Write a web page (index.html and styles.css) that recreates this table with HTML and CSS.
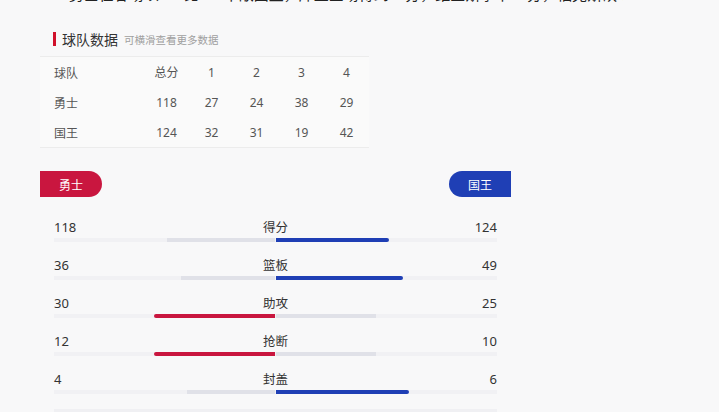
FILE: index.html
```html
<!DOCTYPE html>
<html lang="zh-CN">
<head>
<meta charset="utf-8">
<title>球队数据</title>
<link rel="stylesheet" href="styles.css">
</head>
<body>
<div class="page">
  <p class="lead">1 勇士在客场以118比124不敌国王，库里全场得到32分，维金斯拿下18分，福克斯砍下38分，萨博尼斯贡献三双表现。</p>

  <div class="section-title">
    <span class="mark"></span>
    <span class="title">球队数据</span>
    <span class="hint">可横滑查看更多数据</span>
  </div>

  <div class="score-table">
    <div class="tr head">
      <div class="td team">球队</div><div class="td">总分</div><div class="td">1</div><div class="td">2</div><div class="td">3</div><div class="td">4</div>
    </div>
    <div class="tr">
      <div class="td team">勇士</div><div class="td">118</div><div class="td">27</div><div class="td">24</div><div class="td">38</div><div class="td">29</div>
    </div>
    <div class="tr">
      <div class="td team">国王</div><div class="td">124</div><div class="td">32</div><div class="td">31</div><div class="td">19</div><div class="td">42</div>
    </div>
  </div>

  <div class="teams">
    <span class="pill home">勇士</span>
    <span class="pill away">国王</span>
  </div>

  <div class="stats">
    <div class="stat">
      <div class="stat-line"><span class="v">118</span><span class="label">得分</span><span class="v">124</span></div>
      <div class="bar">
        <div class="half left"><div class="fill lose" style="width:48.76%"></div></div>
        <div class="half right"><div class="fill win away-c" style="width:51.24%"></div></div>
      </div>
    </div>
    <div class="stat">
      <div class="stat-line"><span class="v">36</span><span class="label">篮板</span><span class="v">49</span></div>
      <div class="bar">
        <div class="half left"><div class="fill lose" style="width:42.35%"></div></div>
        <div class="half right"><div class="fill win away-c" style="width:57.65%"></div></div>
      </div>
    </div>
    <div class="stat">
      <div class="stat-line"><span class="v">30</span><span class="label">助攻</span><span class="v">25</span></div>
      <div class="bar">
        <div class="half left"><div class="fill win home-c" style="width:54.55%"></div></div>
        <div class="half right"><div class="fill lose" style="width:45.45%"></div></div>
      </div>
    </div>
    <div class="stat">
      <div class="stat-line"><span class="v">12</span><span class="label">抢断</span><span class="v">10</span></div>
      <div class="bar">
        <div class="half left"><div class="fill win home-c" style="width:54.55%"></div></div>
        <div class="half right"><div class="fill lose" style="width:45.45%"></div></div>
      </div>
    </div>
    <div class="stat">
      <div class="stat-line"><span class="v">4</span><span class="label">封盖</span><span class="v">6</span></div>
      <div class="bar">
        <div class="half left"><div class="fill lose" style="width:40%"></div></div>
        <div class="half right"><div class="fill win away-c" style="width:60%"></div></div>
      </div>
    </div>
    <div class="next-line"></div>
  </div>
</div>
</body>
</html>
```
FILE: styles.css
```css
* { box-sizing: border-box; }
html, body { margin: 0; padding: 0; }
body {
  background: #f8f8f9;
  font-family: "Noto Sans", "Noto Sans CJK SC", sans-serif;
  color: #333;
  overflow: hidden;
}
.page {
  display: flow-root;
  width: 511px;
  padding-left: 40px;
}
.lead {
  margin: -17px 0 0 17px;
  font-size: 15px;
  line-height: 22px;
  height: 22px;
  white-space: nowrap;
  overflow: hidden;
  width: 566px;
  color: #222;
  font-family: "Noto Sans CJK SC", sans-serif;
}
.section-title {
  display: flex;
  align-items: center;
  height: 20px;
  margin-top: 24px;
  padding-left: 13px;
}
.mark {
  width: 3px;
  height: 14px;
  background: #d0112b;
  margin-right: 6px;
}
.title {
  font-size: 14px;
  color: #333;
  font-family: "Noto Sans CJK SC", sans-serif;
}
.hint {
  font-size: 10.5px;
  color: #a0a0a0;
  margin-left: 6px;
  font-family: "Noto Sans CJK SC", sans-serif;
}
.score-table {
  width: 329px;
  margin-top: 7px;
  border-top: 1px solid #ececec;
  border-bottom: 1px solid #ececec;
  background: #fafafa;
}
.tr {
  display: flex;
  height: 30px;
  align-items: center;
}
.td {
  width: 45px;
  text-align: center;
  font-size: 12px;
  color: #555;
}
.td.team {
  width: 104px;
  text-align: left;
  padding-left: 14px;
  font-family: "Noto Sans CJK SC", sans-serif;
}
.teams {
  display: flex;
  justify-content: space-between;
  width: 471px;
  margin-top: 23px;
}
.pill {
  width: 62px;
  height: 26px;
  display: flex;
  align-items: center;
  justify-content: center;
  color: #fff;
  font-size: 12px;
  font-family: "Noto Sans CJK SC", sans-serif;
}
.pill.home {
  background: #c9163f;
  border-radius: 0 13px 13px 0;
}
.pill.away {
  background: #1f3fb5;
  border-radius: 13px 0 0 13px;
}
.stats {
  width: 471px;
  padding: 20px 14px 0;
}
.stat {
  height: 38px;
}
.stat-line {
  display: flex;
  justify-content: space-between;
  align-items: center;
  height: 20px;
  font-size: 13px;
  line-height: 20px;
  color: #333;
}
.stat-line .v { width: 40px; }
.stat-line .v:last-child { text-align: right; }
.label { font-family: "Noto Sans CJK SC", sans-serif; font-size: 12.5px; }
.bar {
  display: flex;
  gap: 1px;
  height: 4px;
  margin-top: 1px;
  background: #f1f1f4;
}
.half {
  flex: 1;
  display: flex;
}
.half.left { justify-content: flex-end; }
.half.right { justify-content: flex-start; }
.fill { height: 4px; }
.lose { background: #e0e1e8; }
.home-c { background: #c9163f; }
.away-c { background: #1f3fb5; }
.left .win { border-radius: 2px 0 0 2px; }
.right .win { border-radius: 0 2px 2px 0; }
.next-line {
  height: 3px;
  background: #f0f0f3;
  margin-top: 2px;
}
```
